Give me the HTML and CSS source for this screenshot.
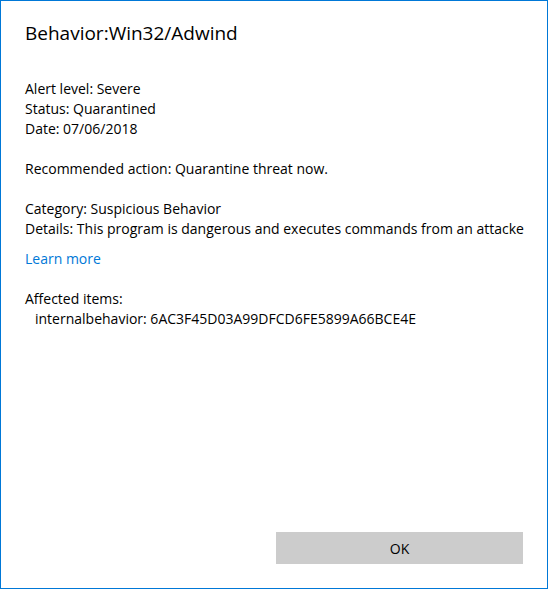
FILE: index.html
```html
<!DOCTYPE html>
<html lang="en">
<head>
<meta charset="utf-8">
<title>Behavior:Win32/Adwind</title>
<link rel="stylesheet" href="styles.css">
</head>
<body>
<div class="dialog">
  <h1 class="title">Behavior:Win32/Adwind</h1>
  <div class="section section-first">
    <div class="line">Alert level: Severe</div>
    <div class="line">Status: Quarantined</div>
    <div class="line">Date: 07/06/2018</div>
  </div>
  <div class="section">
    <div class="line">Recommended action: Quarantine threat now.</div>
  </div>
  <div class="section">
    <div class="line">Category: Suspicious Behavior</div>
    <div class="line clip">Details: This program is dangerous and executes commands from an attacker.</div>
  </div>
  <div class="section section-link">
    <a class="link" href="#">Learn more</a>
  </div>
  <div class="section">
    <div class="line">Affected items:</div>
    <div class="line indent">internalbehavior: 6AC3F45D03A99DFCD6FE5899A66BCE4E</div>
  </div>
  <div class="footer">
    <button class="ok-button" type="button">OK</button>
  </div>
</div>
</body>
</html>
```

FILE: styles.css
```css
html, body {
  margin: 0;
  padding: 0;
  background: #ffffff;
}

.dialog {
  box-sizing: border-box;
  width: 548px;
  height: 589px;
  border: 1px solid #0078d7;
  padding: 18px 23px 24px 24px;
  display: flex;
  flex-direction: column;
  font-family: "Open Sans", "Noto Sans", sans-serif;
  font-size: 14px;
  color: #000000;
  background: #ffffff;
}

.title {
  margin: 0;
  font-size: 19px;
  font-weight: 400;
  line-height: 29px;
}

.section {
  margin-top: 20px;
}

.section-first {
  margin-top: 31px;
}

.section-link {
  margin-top: 10px;
}

.line {
  line-height: 20px;
  white-space: nowrap;
}

.clip {
  overflow: hidden;
}

.indent {
  padding-left: 10px;
}

.link {
  display: block;
  line-height: 20px;
  color: #0078d7;
  text-decoration: none;
}

.footer {
  margin-top: auto;
  display: flex;
  justify-content: flex-end;
  padding-right: 1px;
}

.ok-button {
  width: 247px;
  height: 32px;
  border: none;
  background: #cccccc;
  font-family: inherit;
  font-size: 14px;
  color: #000000;
  padding: 0;
}
```
